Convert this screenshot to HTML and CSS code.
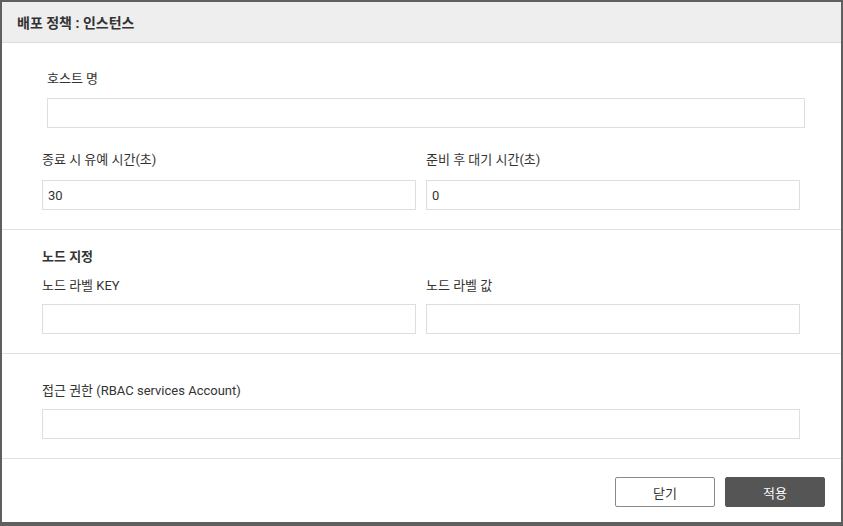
FILE: index.html
```html
<!DOCTYPE html>
<html lang="ko">
<head>
<meta charset="utf-8">
<title>배포 정책 : 인스턴스</title>
<link rel="stylesheet" href="styles.css">
</head>
<body>
<div class="backdrop">
  <div class="dialog">
    <div class="dialog-header">배포 정책 : 인스턴스</div>
    <div class="section section-first">
      <div class="field field-shift">
        <label class="label">호스트 명</label>
        <input class="input" type="text">
      </div>
      <div class="row">
        <div class="field">
          <label class="label">종료 시 유예 시간(초)</label>
          <input class="input" type="text" value="30">
        </div>
        <div class="field">
          <label class="label">준비 후 대기 시간(초)</label>
          <input class="input" type="text" value="0">
        </div>
      </div>
    </div>
    <div class="section section-node">
      <div class="section-title">노드 지정</div>
      <div class="row row-tight">
        <div class="field">
          <label class="label label-tight">노드 라벨 KEY</label>
          <input class="input" type="text">
        </div>
        <div class="field">
          <label class="label label-tight">노드 라벨 값</label>
          <input class="input" type="text">
        </div>
      </div>
    </div>
    <div class="section section-rbac">
      <div class="field">
        <label class="label label-tight">접근 권한 (RBAC services Account)</label>
        <input class="input" type="text">
      </div>
    </div>
    <div class="dialog-footer">
      <button class="btn btn-close" type="button">닫기</button>
      <button class="btn btn-apply" type="button">적용</button>
    </div>
  </div>
</div>
</body>
</html>
```

FILE: styles.css
```css
* { box-sizing: border-box; }
html, body {
  margin: 0;
  padding: 0;
  width: 843px;
  height: 526px;
  overflow: hidden;
}
body {
  background: #5f5f5f;
  font-family: Roboto, "Noto Sans CJK KR", sans-serif;
  font-size: 13px;
  color: #333;
}
.backdrop {
  position: relative;
  width: 843px;
  height: 526px;
}
.dialog {
  position: absolute;
  left: 2px;
  top: 2px;
  width: 839px;
  height: 520px;
  background: #fff;
  display: flex;
  flex-direction: column;
}
.dialog-header {
  height: 41px;
  background: #eeeeee;
  border-bottom: 1px solid #dcdcdc;
  padding: 0 15px 1px;
  display: flex;
  align-items: center;
  font-weight: 700;
  font-size: 14px;
  color: #333;
}
.section {
  border-bottom: 1px solid #e2e2e2;
  padding-left: 40px;
  padding-right: 41px;
}
.section-first { padding-top: 24px; padding-bottom: 19px; }
.section-node { padding-top: 15px; padding-bottom: 19px; }
.section-rbac { padding-top: 25px; padding-bottom: 19px; }
.field {
  display: flex;
  flex-direction: column;
  flex: 1;
}
.field-shift {
  margin-left: 5px;
  margin-right: -5px;
  margin-bottom: 20px;
}
.label {
  line-height: 24px;
  height: 20px;
  margin-bottom: 11px;
  color: #333;
}
.row .label { margin-bottom: 12px; }
.row-tight .label, .label-tight { margin-bottom: 10px; }
.section-title {
  font-weight: 700;
  line-height: 23px;
  height: 20px;
  margin-bottom: 9px;
  color: #333;
}
.row {
  display: flex;
  gap: 10px;
}
.input {
  height: 30px;
  border: 1px solid #dedede;
  border-radius: 0;
  padding: 0 5px;
  font-family: Roboto, "Noto Sans CJK KR", sans-serif;
  font-size: 13px;
  color: #333;
  background: #fff;
  outline: none;
  width: 100%;
}
.dialog-footer {
  flex: 1;
  display: flex;
  justify-content: flex-end;
  align-items: flex-start;
  gap: 10px;
  padding-top: 18px;
  padding-right: 16px;
}
.btn {
  width: 100px;
  height: 30px;
  border-radius: 2px;
  font-family: Roboto, "Noto Sans CJK KR", sans-serif;
  font-size: 13px;
  cursor: pointer;
}
.btn-close {
  background: #fff;
  border: 1px solid #8a8a8a;
  color: #333;
}
.btn-apply {
  background: #555;
  border: 1px solid #555;
  color: #fff;
}
```
